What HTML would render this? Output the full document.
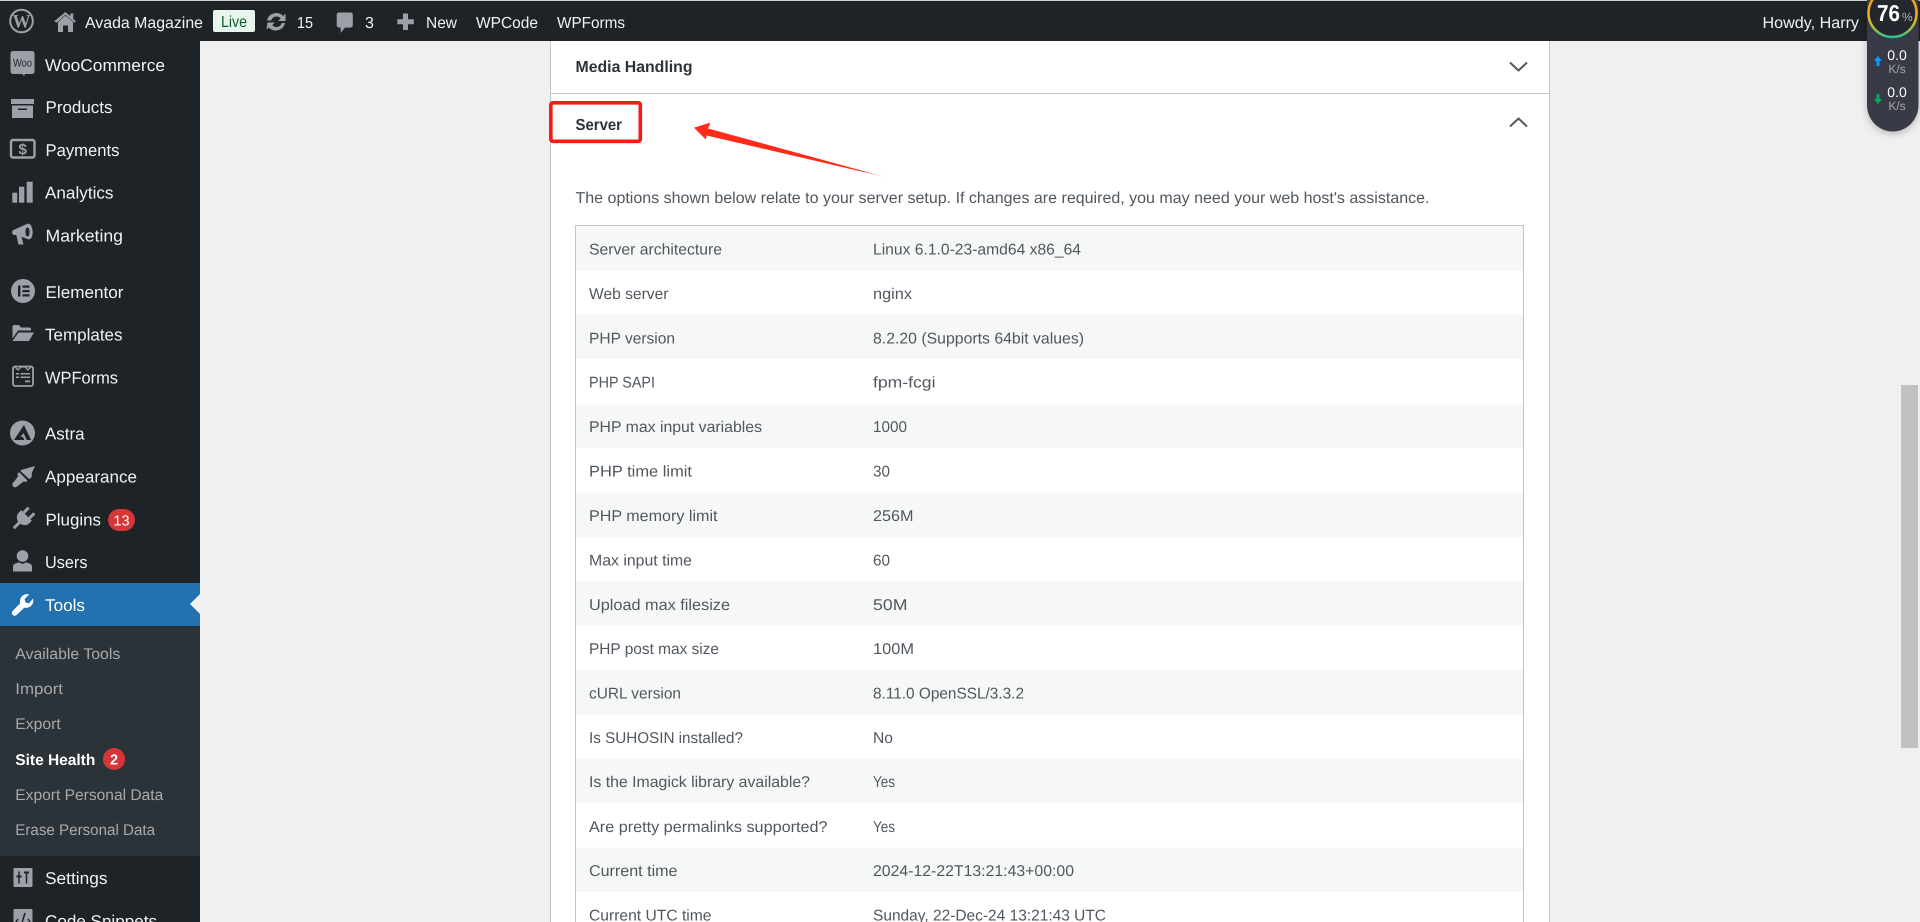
<!DOCTYPE html>
<html lang="en"><head><meta charset="utf-8"><title>Site Health</title>
<style>
html,body{margin:0;padding:0;width:1920px;height:922px;overflow:hidden;background:#f0f0f1}
svg{display:block;font-family:"Liberation Sans",Arial,sans-serif;text-rendering:geometricPrecision}
.m{font-size:17px;fill:#f0f0f1}
.b{font-size:16px;fill:#f0f0f1}
.s{font-size:15.5px;fill:#a7aaad}
.t{font-size:15.6px;fill:#50575e}
.i{fill:#9ca1a7}
</style></head><body>
<svg xmlns="http://www.w3.org/2000/svg" width="1920" height="922" viewBox="0 0 1920 922">
<defs>
<linearGradient id="rg" gradientUnits="userSpaceOnUse" x1="0" y1="0" x2="0" y2="38"><stop offset="0" stop-color="#f0a020"/><stop offset=".45" stop-color="#e8b028"/><stop offset=".75" stop-color="#a8c040"/><stop offset="1" stop-color="#20c0a0"/></linearGradient>
<linearGradient id="ag" gradientUnits="userSpaceOnUse" x1="700" y1="130" x2="887" y2="177"><stop offset="0" stop-color="#ff2a1a"/><stop offset=".85" stop-color="#ff2a1a"/><stop offset="1" stop-color="#ff2a1a" stop-opacity=".1"/></linearGradient>
<filter id="sh" x="-30%" y="-20%" width="160%" height="140%"><feDropShadow dx="0" dy="2" stdDeviation="4" flood-color="#000" flood-opacity=".25"/></filter>
</defs>
<rect width="1920" height="922" fill="#f0f0f1"/>

<!-- panel -->
<rect x="550" y="41" width="1000" height="881" fill="#fff"/>
<rect x="550" y="41" width="1" height="881" fill="#c3c4c7"/>
<rect x="1549" y="41" width="1" height="881" fill="#c3c4c7"/>
<rect x="550" y="93" width="1000" height="1" fill="#c3c4c7"/>
<text x="575.5" y="72" font-size="16" font-weight="700" fill="#2c3338" textLength="117" lengthAdjust="spacingAndGlyphs">Media Handling</text>
<path d="M1510 62.5l8.5 8 8.5-8" fill="none" stroke="#50575e" stroke-width="2"/>
<text x="575.5" y="130" font-size="16" font-weight="700" fill="#2c3338" textLength="46.5" lengthAdjust="spacingAndGlyphs">Server</text>
<path d="M1510 126.5l8.5-8 8.5 8" fill="none" stroke="#50575e" stroke-width="2"/>
<text x="575.5" y="203" font-size="15.8" fill="#50575e" textLength="854" lengthAdjust="spacingAndGlyphs">The options shown below relate to your server setup. If changes are required, you may need your web host's assistance.</text>

<!-- table -->
<rect x="575.5" y="225.5" width="948" height="700" fill="#fff" stroke="#c3c4c7"/>
<g fill="#f6f7f7">
<rect x="576" y="226" width="947" height="44.4"/>
<rect x="576" y="314.8" width="947" height="44.4"/>
<rect x="576" y="403.6" width="947" height="44.4"/>
<rect x="576" y="492.4" width="947" height="44.4"/>
<rect x="576" y="581.2" width="947" height="44.4"/>
<rect x="576" y="670" width="947" height="44.4"/>
<rect x="576" y="758.8" width="947" height="44.4"/>
<rect x="576" y="847.6" width="947" height="44.4"/>
</g>
<g>
<text class="t" x="589" y="254.5" textLength="133" lengthAdjust="spacingAndGlyphs">Server architecture</text><text class="t" x="873" y="254.5" textLength="208" lengthAdjust="spacingAndGlyphs">Linux 6.1.0-23-amd64 x86_64</text>
<text class="t" x="589" y="299" textLength="79.5" lengthAdjust="spacingAndGlyphs">Web server</text><text class="t" x="873" y="299" textLength="39" lengthAdjust="spacingAndGlyphs">nginx</text>
<text class="t" x="589" y="343.5" textLength="86" lengthAdjust="spacingAndGlyphs">PHP version</text><text class="t" x="873" y="343.5" textLength="211" lengthAdjust="spacingAndGlyphs">8.2.20 (Supports 64bit values)</text>
<text class="t" x="589" y="387.5" textLength="66" lengthAdjust="spacingAndGlyphs">PHP SAPI</text><text class="t" x="873" y="387.5" textLength="62.5" lengthAdjust="spacingAndGlyphs">fpm-fcgi</text>
<text class="t" x="589" y="432" textLength="173" lengthAdjust="spacingAndGlyphs">PHP max input variables</text><text class="t" x="873" y="432" textLength="34" lengthAdjust="spacingAndGlyphs">1000</text>
<text class="t" x="589" y="476.5" textLength="103" lengthAdjust="spacingAndGlyphs">PHP time limit</text><text class="t" x="873" y="476.5" textLength="17" lengthAdjust="spacingAndGlyphs">30</text>
<text class="t" x="589" y="521" textLength="128.5" lengthAdjust="spacingAndGlyphs">PHP memory limit</text><text class="t" x="873" y="521" textLength="40.5" lengthAdjust="spacingAndGlyphs">256M</text>
<text class="t" x="589" y="565.5" textLength="103" lengthAdjust="spacingAndGlyphs">Max input time</text><text class="t" x="873" y="565.5" textLength="17" lengthAdjust="spacingAndGlyphs">60</text>
<text class="t" x="589" y="610" textLength="141" lengthAdjust="spacingAndGlyphs">Upload max filesize</text><text class="t" x="873" y="610" textLength="34.5" lengthAdjust="spacingAndGlyphs">50M</text>
<text class="t" x="589" y="654" textLength="130" lengthAdjust="spacingAndGlyphs">PHP post max size</text><text class="t" x="873" y="654" textLength="41" lengthAdjust="spacingAndGlyphs">100M</text>
<text class="t" x="589" y="698.5" textLength="92" lengthAdjust="spacingAndGlyphs">cURL version</text><text class="t" x="873" y="698.5" textLength="151" lengthAdjust="spacingAndGlyphs">8.11.0 OpenSSL/3.3.2</text>
<text class="t" x="589" y="743" textLength="154" lengthAdjust="spacingAndGlyphs">Is SUHOSIN installed?</text><text class="t" x="873" y="743" textLength="20" lengthAdjust="spacingAndGlyphs">No</text>
<text class="t" x="589" y="787" textLength="221" lengthAdjust="spacingAndGlyphs">Is the Imagick library available?</text><text class="t" x="873" y="787" textLength="22" lengthAdjust="spacingAndGlyphs">Yes</text>
<text class="t" x="589" y="832" textLength="238.5" lengthAdjust="spacingAndGlyphs">Are pretty permalinks supported?</text><text class="t" x="873" y="832" textLength="22" lengthAdjust="spacingAndGlyphs">Yes</text>
<text class="t" x="589" y="876" textLength="88.5" lengthAdjust="spacingAndGlyphs">Current time</text><text class="t" x="873" y="876" textLength="201" lengthAdjust="spacingAndGlyphs">2024-12-22T13:21:43+00:00</text>
<text class="t" x="589" y="920.5" textLength="122.5" lengthAdjust="spacingAndGlyphs">Current UTC time</text><text class="t" x="873" y="920.5" textLength="233" lengthAdjust="spacingAndGlyphs">Sunday, 22-Dec-24 13:21:43 UTC</text>
</g>

<!-- annotation -->
<rect x="550.800" y="102.800" width="89.500" height="38.500" rx="2" fill="none" stroke="#fb1a12" stroke-width="3.600"/>
<path d="M694 127.700L710.500 122.500 708 128.500 887 177.500 706.500 135.500 706 139.800Z" fill="url(#ag)"/>

<!-- scrollbar -->
<rect x="1901" y="385" width="17" height="363" fill="#c1c1c1"/>

<!-- sidebar -->
<rect x="0" y="41" width="200" height="881" fill="#1d2327"/>
<rect x="0" y="583" width="200" height="43" fill="#2271b1"/>
<rect x="0" y="626" width="200" height="230" fill="#2c3338"/>
<path d="M200 594l-10 10 10 10z" fill="#f0f0f1"/>
<g>
<text class="m" x="45" y="71" textLength="120" lengthAdjust="spacingAndGlyphs">WooCommerce</text>
<text class="m" x="45.5" y="113" textLength="67" lengthAdjust="spacingAndGlyphs">Products</text>
<text class="m" x="45.5" y="156" textLength="74" lengthAdjust="spacingAndGlyphs">Payments</text>
<text class="m" x="45" y="198.500" textLength="68.5" lengthAdjust="spacingAndGlyphs">Analytics</text>
<text class="m" x="45.5" y="241.500" textLength="77.5" lengthAdjust="spacingAndGlyphs">Marketing</text>
<text class="m" x="45.5" y="298" textLength="78" lengthAdjust="spacingAndGlyphs">Elementor</text>
<text class="m" x="45" y="340.5" textLength="77.5" lengthAdjust="spacingAndGlyphs">Templates</text>
<text class="m" x="45" y="383.5" textLength="73" lengthAdjust="spacingAndGlyphs">WPForms</text>
<text class="m" x="45" y="439.500" textLength="39.5" lengthAdjust="spacingAndGlyphs">Astra</text>
<text class="m" x="45" y="482.500" textLength="92" lengthAdjust="spacingAndGlyphs">Appearance</text>
<text class="m" x="45.5" y="525.500" textLength="55.5" lengthAdjust="spacingAndGlyphs">Plugins</text>
<text class="m" x="45" y="568" textLength="42.5" lengthAdjust="spacingAndGlyphs">Users</text>
<text class="m" x="45" y="611" style="fill:#fff" textLength="40" lengthAdjust="spacingAndGlyphs">Tools</text>
<text class="m" x="45" y="884" textLength="62.5" lengthAdjust="spacingAndGlyphs">Settings</text>
<text class="m" x="45" y="927" textLength="112" lengthAdjust="spacingAndGlyphs">Code Snippets</text>
<text class="s" x="15.3" y="659" textLength="105" lengthAdjust="spacingAndGlyphs">Available Tools</text>
<text class="s" x="15.3" y="694" textLength="47.7" lengthAdjust="spacingAndGlyphs">Import</text>
<text class="s" x="15.3" y="729" textLength="45.4" lengthAdjust="spacingAndGlyphs">Export</text>
<text x="15.3" y="765" font-size="15.5" font-weight="700" fill="#fff" textLength="80" lengthAdjust="spacingAndGlyphs">Site Health</text>
<text class="s" x="15.3" y="800" textLength="148" lengthAdjust="spacingAndGlyphs">Export Personal Data</text>
<text class="s" x="15.3" y="835" textLength="139.7" lengthAdjust="spacingAndGlyphs">Erase Personal Data</text>
</g>
<!-- badges -->
<rect x="108" y="509" width="27" height="22" rx="11" fill="#d63638"/>
<text x="121.5" y="525.5" font-size="14.5" fill="#fff" text-anchor="middle">13</text>
<circle cx="114" cy="759" r="11" fill="#d63638"/>
<text x="114" y="764.5" font-size="14.5" font-weight="700" fill="#fff" text-anchor="middle">2</text>

<!-- sidebar icons -->
<g class="i">
<path d="M13 51h19a2.5 2.5 0 0 1 2.5 2.5v18a2.5 2.5 0 0 1-2.5 2.5h-7l-1 2-1.500-2H13a2.500 2.500 0 0 1-2.500-2.500v-18A2.500 2.500 0 0 1 13 51z"/>
<text x="22.500" y="66.500" font-size="11" fill="#1d2327" text-anchor="middle" textLength="19" lengthAdjust="spacingAndGlyphs">Woo</text>
<rect x="11" y="99" width="23" height="5"/>
<path d="M12 105.500h21V118H12zM18 108.500v1.500h9v-1.500z" fill-rule="evenodd"/>
<rect x="11" y="140" width="23.500" height="17.500" rx="2" fill="none" stroke="#9ca1a7" stroke-width="2.400"/>
<text x="22.700" y="154.500" font-size="15.500" font-weight="700" text-anchor="middle">$</text>
<rect x="12.300" y="192.700" width="5" height="10"/><rect x="19" y="186.700" width="5.300" height="16"/><rect x="26.700" y="181.700" width="6" height="21"/>
<path d="M12 232.500c0-1.500 1-2.500 2.500-3L27 224c2-1 3.500 0 4.500 2.500 1.500 3.500 1.500 7 .5 10-.8 2.500-2.500 3.200-4.500 2.500l-6-2.200 2 7.700h-5l-2.200-9.500h-1.800c-1.500 0-2.500-1.200-2.500-3zM27.500 227.500c-1.200 0-2 2-2 4.500s.8 4.500 2 4.500 2-2 2-4.500-.8-4.500-2-4.500z" fill-rule="evenodd"/>
<circle cx="23" cy="291" r="12"/>
<rect x="18" y="285.500" width="2.400" height="11" fill="#1d2327"/><rect x="22.500" y="285.500" width="7" height="2.200" fill="#1d2327"/><rect x="22.500" y="290" width="7" height="2.200" fill="#1d2327"/><rect x="22.500" y="294.300" width="7" height="2.200" fill="#1d2327"/>
<path d="M12.500 326.500c0-.8.700-1.500 1.500-1.500h5l2 2.500h8.500c.8 0 1.500.7 1.500 1.500v1.500H18l-5.500 8zM18.500 332.500H34l-5 8.500H12.500z"/>
<rect x="13" y="366.500" width="20" height="19.500" rx="2" fill="none" stroke="#9ca1a7" stroke-width="1.800"/>
<path d="M15 367l3 3 3-3h4l3 3 3-3" fill="none" stroke="#9ca1a7" stroke-width="1.300"/>
<rect x="16" y="373" width="3" height="1.500"/><rect x="20.500" y="373" width="9.500" height="1.500"/><rect x="16" y="376.500" width="3" height="1.500"/><rect x="20.500" y="376.500" width="9.500" height="1.500"/><rect x="25" y="380.500" width="5" height="1.800"/>
<circle cx="22.500" cy="433" r="12.500"/>
<path d="M24 425l7 15h-4.200l-3.300-7-3 4h2.500l1.300 3H14z" fill="#1d2327"/>
<path d="M21 470l14-4-3 6.500-.5 5-2.500 1.500-8.500-8zM19 472l8.500 8.500-1.500 1.500-2.500-.5-7 5.500c-2.300 1.200-5-1-4-3.500l5.500-7-.5-2.500z"/>
<g transform="rotate(45 23 519)">
<rect x="17.500" y="507" width="3" height="7"/><rect x="25.500" y="507" width="3" height="7"/>
<path d="M15.500 514h15v3.500c0 3.500-2.500 6-6 6.800V532h-3v-7.700c-3.500-.8-6-3.300-6-6.800z"/>
</g>
<circle cx="22.500" cy="556" r="5.800"/>
<path d="M13 571.500v-5c0-1.500 1-2.500 3.200-3.200l3-1c1 1 2.100 1.500 3.300 1.500s2.300-.5 3.300-1.500l3 1c2.200.7 3.200 1.700 3.200 3.200v5z"/>
<rect x="13.500" y="868" width="19" height="19" rx="1"/>
<rect x="13.500" y="909" width="19" height="19" rx="1"/>
</g>
<path d="M19 871.500v12M26.500 871.500v12" stroke="#1d2327" stroke-width="1.500"/><path d="M16.500 876.500h5M24 872.500h5" stroke="#1d2327" stroke-width="2"/>
<path d="M18 919l-2 3 2 3M28 919l2 3-2 3M25 913l-4 13" fill="none" stroke="#1d2327" stroke-width="1.500"/>
<path d="M33 598.500c.8 2.700.1 5.400-1.800 7.300-1.800 1.800-4.400 2.500-6.800 1.800l-7.700 7.300c-1.100 1.100-2.900 1.100-4 0s-1.100-2.900 0-4l7.500-7.700c-.7-2.500 0-5.100 1.800-6.900 1.900-1.900 4.600-2.600 7.200-1.800l-4.600 4.500.9 3.500 3.500.9z" fill="#fff"/>

<!-- admin bar -->
<rect width="1920" height="41" fill="#1d2327"/>
<rect width="1920" height="1" fill="#cfcfcf"/>
<circle cx="21.500" cy="21" r="11.300" fill="none" stroke="#9ca1a7" stroke-width="2"/>
<text x="21.500" y="27.500" font-size="19" font-weight="700" fill="#9ca1a7" text-anchor="middle" textLength="18" lengthAdjust="spacingAndGlyphs" style="font-family:'Liberation Serif',serif">W</text>
<path class="i" d="M65.500 12l4.800 4.300V13.500h3v5.500l2.500 2.200-1.300 1.500-9-8-9 8L54.200 21.200zM58 22l7.500-6.500L73 22v10h-5v-6.500h-5V32h-5z"/>
<text class="b" x="85" y="28" textLength="118" lengthAdjust="spacingAndGlyphs">Avada Magazine</text>
<rect x="213" y="10" width="42" height="22" rx="2" fill="#e8f5ec"/>
<text x="221" y="27" font-size="16" fill="#0a5c2c" textLength="26" lengthAdjust="spacingAndGlyphs">Live</text>
<path class="i" d="M276.500 13c2.700 0 5 1.200 6.600 3l2.400-2.400v7.400h-7.400l2.600-2.600c-1-1.200-2.500-1.900-4.200-1.900-2.500 0-4.600 1.700-5.300 4H267c.800-4.300 4.600-7.500 9.500-7.500zM267.500 22.500h7.400l-2.600 2.600c1 1.200 2.500 1.900 4.200 1.900 2.500 0 4.600-1.700 5.300-4h3.200c-.8 4.300-4.600 7.500-9.500 7.500-2.700 0-5-1.200-6.600-3l-2.400 2.400z"/>
<text class="b" x="297" y="28" textLength="16" lengthAdjust="spacingAndGlyphs">15</text>
<path class="i" d="M339 12.500h11.500c1.300 0 2.300 1 2.300 2.300v10.500c0 1.300-1 2.300-2.300 2.300H345l-4.300 5.400V27.600H339c-1.300 0-2.300-1-2.300-2.300V14.800c0-1.300 1-2.300 2.300-2.300z"/>
<text class="b" x="365" y="28">3</text>
<path class="i" d="M403 13.500h5v5.700h5.800v5h-5.800v5.800h-5v-5.800h-5.700v-5h5.700z"/>
<text class="b" x="426" y="28" textLength="31" lengthAdjust="spacingAndGlyphs">New</text>
<text class="b" x="476" y="28" textLength="62" lengthAdjust="spacingAndGlyphs">WPCode</text>
<text class="b" x="557" y="28" textLength="68" lengthAdjust="spacingAndGlyphs">WPForms</text>
<text class="b" x="1762.500" y="28" textLength="96.500" lengthAdjust="spacingAndGlyphs">Howdy, Harry</text>

<!-- speed widget -->
<path d="M1867 0h51.500v105c0 14.500-11.500 26.500-25.750 26.500S1867 119.500 1867 105z" fill="#393b45" filter="url(#sh)"/>
<circle cx="1892.500" cy="13" r="24" fill="#24272d" stroke="url(#rg)" stroke-width="2.500"/>
<text x="1877" y="21" font-size="23" font-weight="700" fill="#fff" textLength="23" lengthAdjust="spacingAndGlyphs">76</text>
<text x="1902" y="21" font-size="12" fill="#b0b2b8">%</text>
<path d="M1878 56l4 5h-2.500v5h-3v-5H1874z" fill="#0a9cf5"/>
<path d="M1878 104l4-5h-2.500v-5h-3v5H1874z" fill="#0aa95a"/>
<text x="1897" y="60" font-size="14" fill="#fff" text-anchor="middle">0.0</text>
<text x="1897" y="73" font-size="12" fill="#a4a6ac" text-anchor="middle">K/s</text>
<text x="1897" y="97" font-size="14" fill="#fff" text-anchor="middle">0.0</text>
<text x="1897" y="110" font-size="12" fill="#a4a6ac" text-anchor="middle">K/s</text>
</svg>
</body></html>
